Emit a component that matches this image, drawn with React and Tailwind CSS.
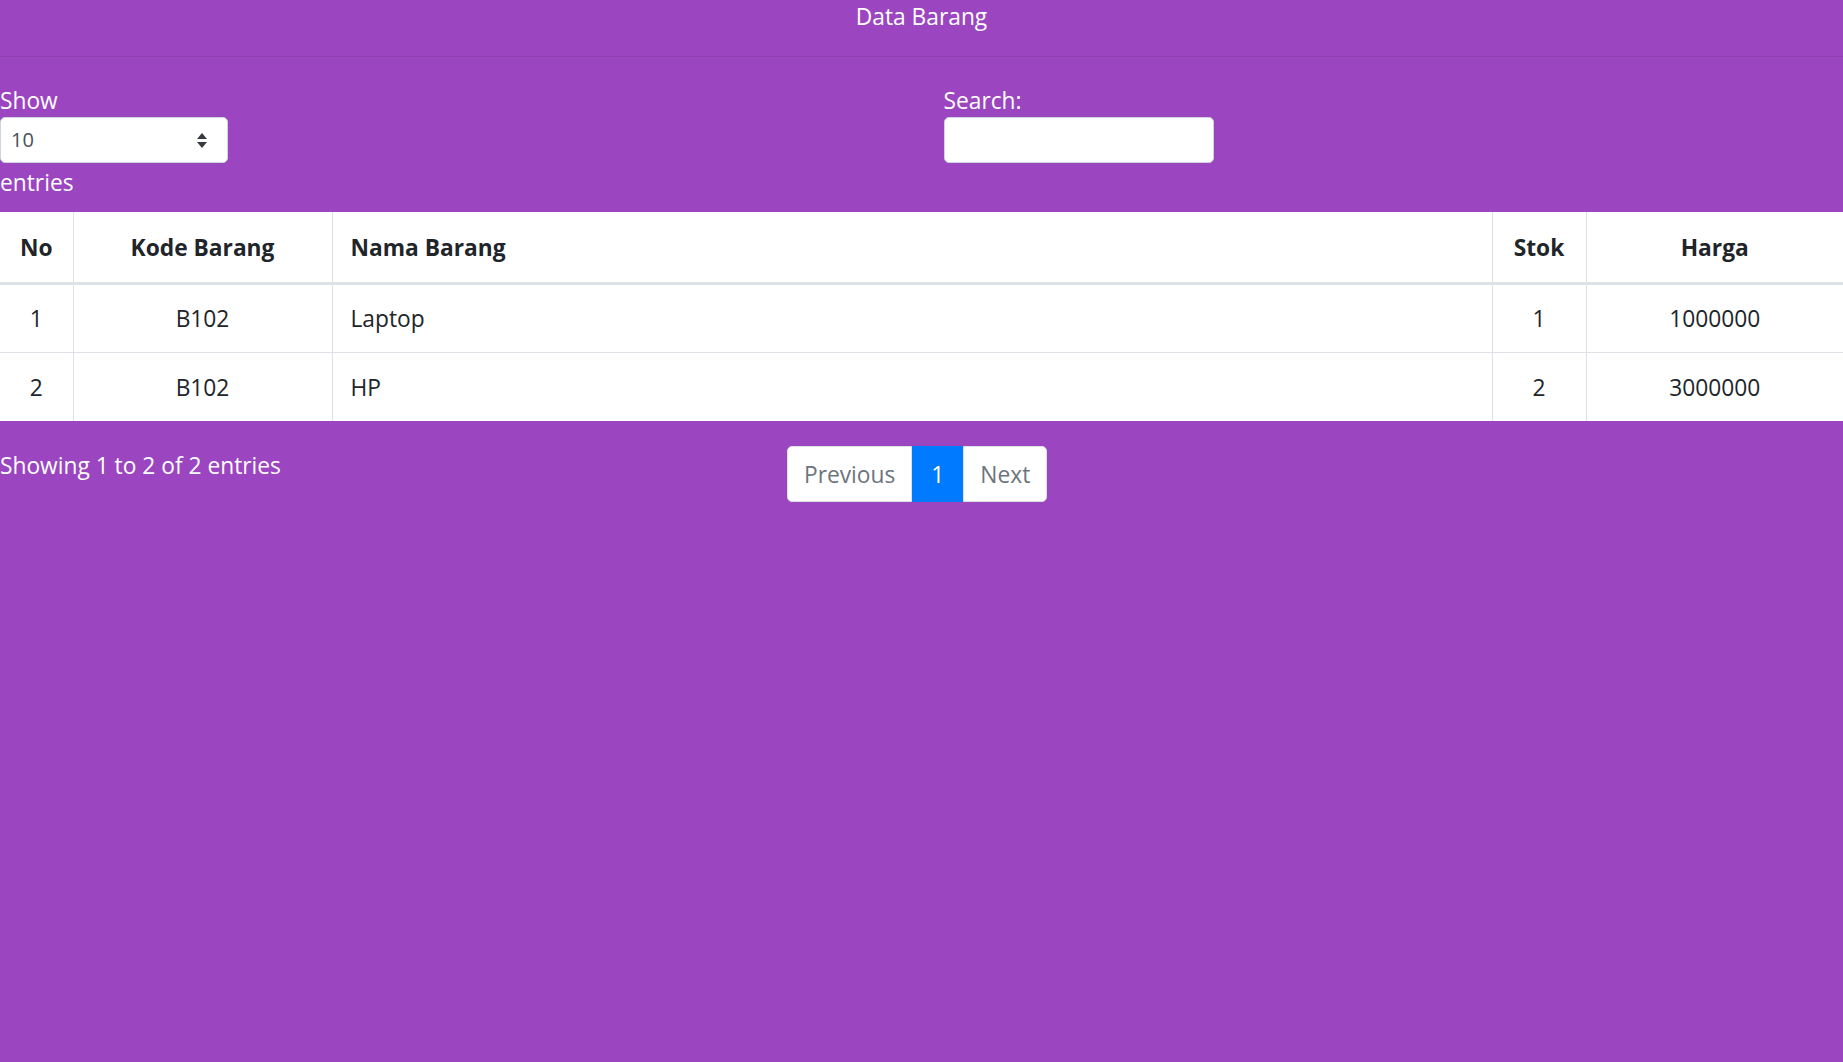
import React from "react";

const rows = [
  { no: 1, kode: "B102", nama: "Laptop", stok: 1, harga: "1000000" },
  { no: 2, kode: "B102", nama: "HP", stok: 2, harga: "3000000" },
];

export default function App() {
  return (
    <div
      className="min-h-[1062px] w-full bg-[#9c45c0] text-white"
      style={{ fontFamily: '"Open Sans", "Noto Sans", sans-serif' }}
    >
      {/* Title bar */}
      <div className="h-[57px] border-b border-[#9140b3] text-center text-[22.75px] leading-[34px]">
        Data Barang
      </div>

      {/* Controls */}
      <div className="grid grid-cols-2 pt-[26px] text-[22.75px] leading-[34px]">
        <div className="flex flex-col items-start">
          <span className="pt-[1px] leading-[33px]">Show</span>
          <div className="relative flex h-[46px] w-[228px] items-center rounded-[5px] border border-[#ced4da] bg-white pl-[10px] text-[20px] text-[#495057]">
            10
            <svg
              className="absolute right-[20px] top-[15px]"
              width="10"
              height="15"
              viewBox="0 0 10 15"
            >
              <path d="M5 0 L10 6 L0 6 Z" fill="#343a40" />
              <path d="M0 9 L10 9 L5 15 Z" fill="#343a40" />
            </svg>
          </div>
          <span className="mt-[3px]">entries</span>
        </div>
        <div className="flex flex-col items-start pl-[22px]">
          <span className="pt-[1px] leading-[33px]">Search:</span>
          <div className="h-[46px] w-[270px] rounded-[5px] border border-[#ced4da] bg-white" />
        </div>
      </div>

      {/* Table */}
      <table className="mt-[12px] w-full border-collapse bg-white text-[22.75px] text-[#212529]">
        <thead>
          <tr className="h-[71px] border-b-[3px] border-[#dee2e6] font-bold">
            <th className="w-[73px] border-r border-[#dee2e6] pt-[2px] text-center">No</th>
            <th className="w-[259px] border-r border-[#dee2e6] pt-[2px] text-center">Kode Barang</th>
            <th className="border-r border-[#dee2e6] pl-[18px] pt-[2px] text-left">Nama Barang</th>
            <th className="w-[94px] border-r border-[#dee2e6] pt-[2px] text-center">Stok</th>
            <th className="w-[257px] pt-[2px] text-center">Harga</th>
          </tr>
        </thead>
        <tbody>
          {rows.map((r, i) => (
            <tr
              key={r.no}
              className={
                i === 0 ? "h-[69px] border-b border-[#dee2e6]" : "h-[69px]"
              }
            >
              <td className="border-r border-[#dee2e6] pt-[2px] text-center">{r.no}</td>
              <td className="border-r border-[#dee2e6] pt-[2px] text-center">{r.kode}</td>
              <td className="border-r border-[#dee2e6] pl-[18px] pt-[2px] text-left">{r.nama}</td>
              <td className="border-r border-[#dee2e6] pt-[2px] text-center">{r.stok}</td>
              <td className="pt-[2px] text-center">{r.harga}</td>
            </tr>
          ))}
        </tbody>
      </table>

      {/* Footer */}
      <div className="grid grid-cols-[768px_1fr] pt-[25px] text-[22.75px] leading-[34px]">
        <div className="pt-[3px]">Showing 1 to 2 of 2 entries</div>
        <div className="pl-[19px]">
          <div className="flex h-[56px] w-max items-stretch">
            <div className="flex items-center rounded-l-[5px] border border-[#dee2e6] bg-white px-[16px] pt-[2px] text-[#6c757d]">
              Previous
            </div>
            <div className="flex w-[51px] items-center justify-center border border-[#007bff] bg-[#007bff] pt-[2px] text-white">
              1
            </div>
            <div className="flex items-center rounded-r-[5px] border border-[#dee2e6] bg-white px-[16px] pt-[2px] text-[#6c757d]">
              Next
            </div>
          </div>
        </div>
      </div>
    </div>
  );
}
